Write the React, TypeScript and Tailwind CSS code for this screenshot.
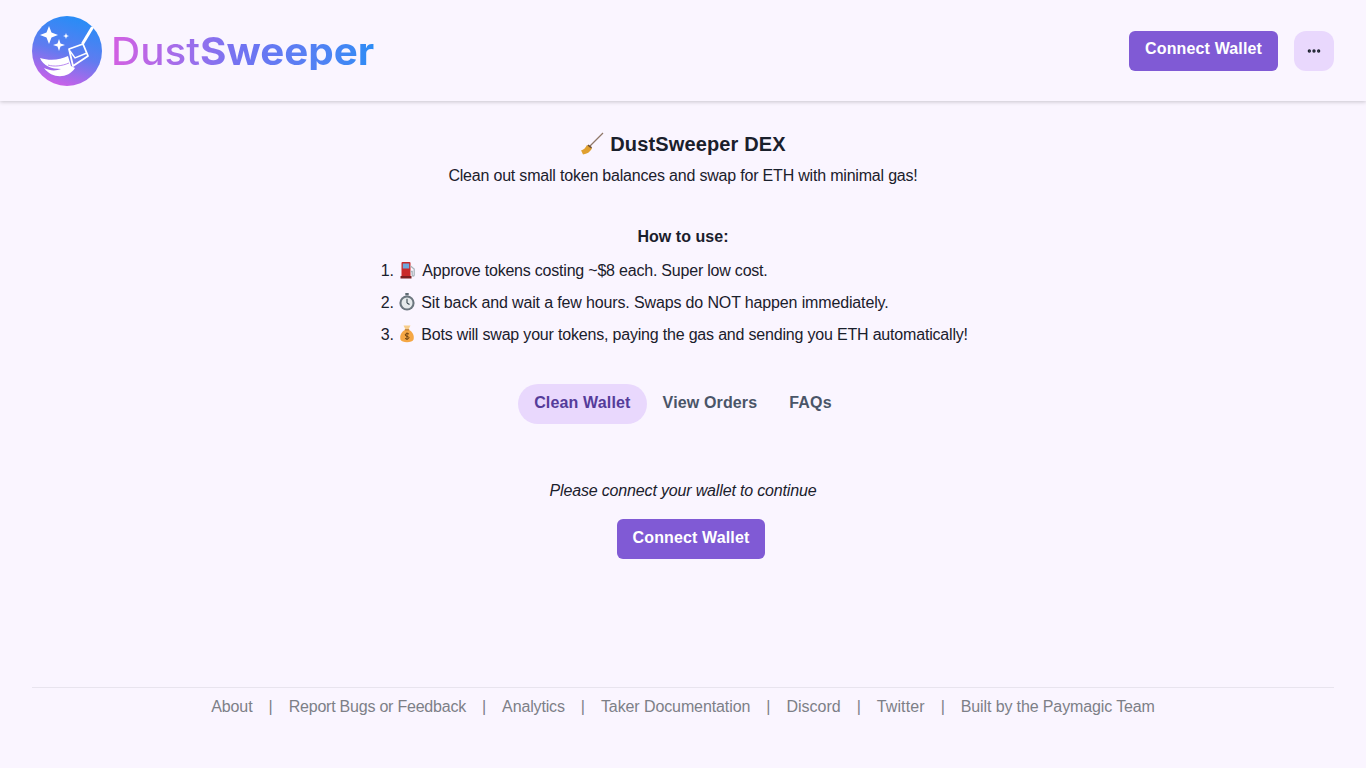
import { MoreHorizontal } from 'lucide-react';

const footerLinks = [
    { label: 'About', tracking: 'tracking-[-0.1px]' },
    { label: 'Report Bugs or Feedback', tracking: 'tracking-[-0.22px]' },
    { label: 'Analytics', tracking: 'tracking-[-0.15px]' },
    { label: 'Taker Documentation', tracking: 'tracking-[-0.1px]' },
    { label: 'Discord', tracking: 'tracking-normal' },
    { label: 'Twitter', tracking: 'tracking-[0.1px]' },
    { label: 'Built by the Paymagic Team', tracking: 'tracking-[-0.12px]' },
];

const LogoMark = () => (
    <svg width="70" height="70" viewBox="0 0 70 70" className="flex-shrink-0">
        <defs>
            <linearGradient id="logoFill" x1="0.65" y1="0.05" x2="0.35" y2="1">
                <stop offset="0" stopColor="#2a8cf6" />
                <stop offset="0.5" stopColor="#5f7cf0" />
                <stop offset="1" stopColor="#cf5fe8" />
            </linearGradient>
        </defs>
        <circle cx="35" cy="35" r="35" fill="url(#logoFill)" />
        {/* sparkles */}
        <path d="M17 10 L19.5 16.5 L26 19 L19.5 21.5 L17 28 L14.5 21.5 L8 19 L14.5 16.5 Z" fill="#fff" />
        <path d="M27 23 L28.5 27.5 L33 29 L28.5 30.5 L27 35 L25.5 30.5 L21 29 L25.5 27.5 Z" fill="#fff" />
        <path d="M34 17 L34.8 19.2 L37 20 L34.8 20.8 L34 23 L33.2 20.8 L31 20 L33.2 19.2 Z" fill="#fff" />
        {/* broom */}
        <path d="M60 12 L51 27" stroke="#fff" strokeWidth="3" strokeLinecap="round" />
        <path d="M37 33 L51 28 L56 40 L41 50 Z" fill="none" stroke="#fff" strokeWidth="1.8" strokeLinejoin="round" />
        <path d="M38 35 L43 42 L55 37" fill="none" stroke="#fff" strokeWidth="1.4" />
        <path d="M8 42 C18 45 28 44 36 40 L39 50 L43 52 C36 63 20 63 12 52 C18 55 24 55 29 53 C20 53 11 50 8 42 Z" fill="#fff" />
        <path d="M16 49 C22 51 30 50 37 47" fill="none" stroke="#a86cec" strokeWidth="0.8" />
    </svg>
);

const PumpEmoji = () => (
    <svg width="21" height="18" viewBox="-1 0 21 18" className="inline-block align-[-3px]">
        <path d="M2.5 2 a1 1 0 0 1 1 -1 h7 a1 1 0 0 1 1 1 V17 H2.5 Z" fill="#c92a2a" />
        <rect x="3.8" y="2.5" width="6.4" height="5" fill="#6fa8dc" />
        <rect x="1.5" y="15" width="11" height="2.5" fill="#7c1f1f" />
        <path d="M11.5 5 L15.2 8 V14 a1 1 0 0 1 -2 0 V10.5 H11.5" fill="none" stroke="#a9b4ba" strokeWidth="1.3" />
    </svg>
);

const StopwatchEmoji = () => (
    <svg width="19" height="18" viewBox="0 0 19 18" className="inline-block align-[-3px]">
        <rect x="7.3" y="0" width="3.4" height="2.4" fill="#5f6b73" />
        <circle cx="9" cy="10" r="7.6" fill="#6b767e" />
        <circle cx="9" cy="10" r="5.5" fill="#e6eaec" />
        <path d="M9 10 L9 5.8 M9 10 L11.5 11.5" stroke="#37474f" strokeWidth="1.1" />
    </svg>
);

const MoneyBagEmoji = () => (
    <svg width="19" height="18" viewBox="0 0 19 18" className="inline-block align-[-3px]">
        <path d="M5.5 0.5 H12.5 L10.5 4.5 H7.5 Z" fill="#f7cd8a" />
        <path d="M7 5 C3 7 1.5 11 2.5 14.5 C3.5 18 14.5 18 15.5 14.5 C16.5 11 15 7 11 5 Z" fill="#f5a744" />
        <rect x="6.8" y="4.2" width="4.4" height="1.2" fill="#b9772a" />
        <path d="M11 9 C9.5 8 7 8.5 7.2 10 C7.4 11.7 11 11 11 12.7 C11 14.2 8.3 14.4 7 13.4 M9 7.5 V15" fill="none" stroke="#6f4310" strokeWidth="1" />
    </svg>
);

const BroomEmoji = () => (
    <svg width="24" height="24" viewBox="0 0 24 24" className="inline-block align-[-5px]">
        <path d="M23 1 L10 14" stroke="#8f7768" strokeWidth="1.3" />
        <path d="M7 13 L12 16.5 C10 20 7 22 3 22.5 C2.5 21 1.5 19.5 1 18.5 C3.5 18 5.5 16 7 13 Z" fill="#e0a030" />
        <path d="M8 13.2 L11.6 15.8" stroke="#6d4c2f" strokeWidth="1.6" />
    </svg>
);

const ConnectButton = ({ className = '' }: { className?: string }) => (
    <button className={`h-10 px-4 rounded-md bg-[#805ad5] text-white font-semibold text-base tracking-[0.14px] ${className}`}>
        Connect Wallet
    </button>
);

export default function App() {
    return (
        <div className="min-h-screen flex flex-col bg-[#faf5ff] text-[#1a202c] text-base font-['Liberation_Sans',Arial,sans-serif]">
            {/* Header */}
            <header className="h-[101px] px-8 flex items-center justify-between shadow-[0_1px_4px_rgba(0,0,0,0.2)]">
                <div className="flex items-center gap-[9px]">
                    <LogoMark />
                    <span className="text-[38px] leading-none origin-left scale-x-[1.063] font-['Inter',sans-serif] bg-gradient-to-r from-[#d35fe2] via-[#6f73f2] to-[#2a8cf5] bg-clip-text text-transparent">
                        <span className="font-medium">Dust</span>
                        <span className="font-bold">Sweeper</span>
                    </span>
                </div>
                <div className="flex items-center gap-4">
                    <ConnectButton className="pb-1" />
                    <button className="w-10 h-10 rounded-xl bg-[#e9d8fd] flex items-center justify-center">
                        <MoreHorizontal size={16} strokeWidth={3} />
                    </button>
                </div>
            </header>

            {/* Intro */}
            <main className="flex-1 flex flex-col items-center pt-[30px]">
                <h1 className="text-xl font-bold leading-[26px] flex items-center gap-1.5 tracking-[0.15px]">
                    <BroomEmoji />
                    DustSweeper DEX
                </h1>
                <p className="mt-[7px] leading-6 tracking-[-0.197px]">Clean out small token balances and swap for ETH with minimal gas!</p>
                <p className="mt-[37px] leading-6 font-bold tracking-[0.05px]">How to use:</p>
                <ol className="mt-[10px] list-decimal w-[570px]">
                    <li className="mb-2 leading-6 whitespace-nowrap tracking-[-0.21px]"><PumpEmoji /> Approve tokens costing ~$8 each. Super low cost.</li>
                    <li className="mb-2 leading-6 whitespace-nowrap tracking-[-0.14px]"><StopwatchEmoji /> Sit back and wait a few hours. Swaps do NOT happen immediately.</li>
                    <li className="mb-2 leading-6 whitespace-nowrap tracking-[-0.19px]"><MoneyBagEmoji /> Bots will swap your tokens, paying the gas and sending you ETH automatically!</li>
                </ol>

                {/* Tabs */}
                <div className="mt-[29px] flex items-center font-semibold text-[#4a5568]">
                    <button className="h-10 px-4 pb-0.5 rounded-full bg-[#e9d8fd] text-[#553c9a] font-semibold tracking-[0.16px]">Clean Wallet</button>
                    <button className="h-10 px-4 pb-0.5 font-semibold tracking-[0.14px]">View Orders</button>
                    <button className="h-10 px-4 pb-0.5 font-semibold tracking-[0.2px]">FAQs</button>
                </div>

                <p className="mt-[55px] leading-6 italic tracking-[-0.16px]">Please connect your wallet to continue</p>
                <ConnectButton className="pb-0.5 mt-4 ml-4" />
            </main>

            {/* Footer */}
            <footer className="mx-8 h-[81px] border-t border-[#e8e4ee] pt-[7px] flex justify-center text-[#7d7f87] leading-6">
                {footerLinks.map((link, i) => (
                    <span key={link.label} className="whitespace-nowrap">
                        {i > 0 && <span className="mx-4">|</span>}
                        <span className={link.tracking}>{link.label}</span>
                    </span>
                ))}
            </footer>
        </div>
    );
}
